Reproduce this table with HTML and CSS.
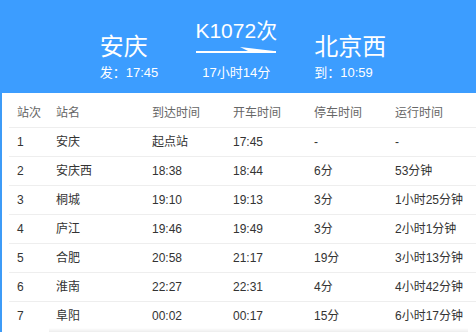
FILE: index.html
```html
<!DOCTYPE html>
<html lang="zh">
<head>
<meta charset="utf-8">
<link rel="stylesheet" href="styles.css">
</head>
<body>
<div class="page">
  <div class="banner">
    <div class="end">
      <div class="station">安庆</div>
      <div class="time">发：17:45</div>
    </div>
    <div class="mid">
      <div class="train">K1072次</div>
      <svg class="arrow" width="80" height="8" viewBox="0 0 80 8">
        <rect x="0" y="6" width="80" height="2" fill="#ffffff"/>
        <polygon points="44,2 80,6.2 80,7 52,6" fill="#ffffff"/>
      </svg>
      <div class="dur">17小时14分</div>
    </div>
    <div class="end">
      <div class="station">北京西</div>
      <div class="time">到：10:59</div>
    </div>
  </div>
  <div class="list">
    <div class="row head">
      <div>站次</div><div>站名</div><div>到达时间</div><div>开车时间</div><div>停车时间</div><div>运行时间</div>
    </div>
    <div class="row"><div>1</div><div>安庆</div><div>起点站</div><div>17:45</div><div>-</div><div>-</div></div>
    <div class="row"><div>2</div><div>安庆西</div><div>18:38</div><div>18:44</div><div>6分</div><div>53分钟</div></div>
    <div class="row"><div>3</div><div>桐城</div><div>19:10</div><div>19:13</div><div>3分</div><div>1小时25分钟</div></div>
    <div class="row"><div>4</div><div>庐江</div><div>19:46</div><div>19:49</div><div>3分</div><div>2小时1分钟</div></div>
    <div class="row"><div>5</div><div>合肥</div><div>20:58</div><div>21:17</div><div>19分</div><div>3小时13分钟</div></div>
    <div class="row"><div>6</div><div>淮南</div><div>22:27</div><div>22:31</div><div>4分</div><div>4小时42分钟</div></div>
    <div class="row last"><div>7</div><div>阜阳</div><div>00:02</div><div>00:17</div><div>15分</div><div>6小时17分钟</div></div>
    <div class="fade"></div>
  </div>
</div>
</body>
</html>
```
FILE: styles.css
```css
html, body {
  margin: 0;
  padding: 0;
  background: #ffffff;
}
body {
  font-family: "Liberation Sans", "Noto Sans CJK SC", sans-serif;
  width: 476px;
  height: 332px;
  overflow: hidden;
}
.page {
  border-left: 2px solid #3d9bf7;
  min-height: 332px;
  box-sizing: border-box;
}
.banner {
  background: #3c9dff;
  height: 93px;
  margin-left: -2px;
  box-sizing: border-box;
  padding: 19px 0 0 10px;
  display: flex;
  justify-content: center;
  align-items: flex-start;
  gap: 38px;
  color: #ffffff;
}
.end {
  margin-top: 14px;
  display: flex;
  flex-direction: column;
}
.station {
  font-size: 24px;
  line-height: 28px;
}
.time {
  font-size: 13px;
  line-height: 16px;
  margin-top: 4px;
}
.mid {
  display: flex;
  flex-direction: column;
  align-items: center;
  width: 80px;
}
.train {
  font-size: 21px;
  line-height: 24px;
  white-space: nowrap;
}
.arrow {
  display: block;
  margin-top: 2px;
}
.dur {
  font-size: 13px;
  line-height: 16px;
  margin-top: 12px;
  white-space: nowrap;
}
.list {
  margin-left: 7px;
  font-size: 12px;
  color: #333333;
}
.row {
  display: grid;
  grid-template-columns: 39px 96px 81px 81px 81px 1fr;
  line-height: 28px;
  border-bottom: 1px solid #eeeeee;
}
.row > div {
  padding-left: 8px;
  white-space: nowrap;
}
.row.head {
  color: #666666;
  padding-top: 7px;
  padding-bottom: 1px;
  line-height: 26px;
}
.row.last {
  border-bottom: none;
  line-height: 24px;
  padding-top: 2px;
}
.fade {
  margin-left: 40px;
  width: 419px;
  height: 4px;
  background: linear-gradient(to bottom, rgba(0,0,0,0), rgba(0,0,0,0.07));
}
```
